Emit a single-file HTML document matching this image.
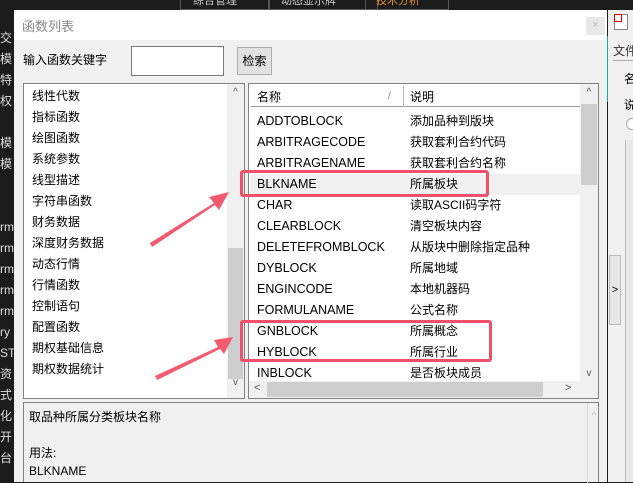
<!DOCTYPE html><html><head><meta charset="utf-8"><style>
*{margin:0;padding:0;box-sizing:border-box}
body{width:633px;height:482px;overflow:hidden;background:#1c1c1c;font-family:"Liberation Sans","Noto Sans CJK SC",sans-serif;font-size:12px;color:#000;position:relative}
.a{position:absolute}
.side{color:#ddd;font-size:12px}
</style></head><body>
<div class="a" style="left:180px;top:-1px;width:90px;height:11px;border:1px solid #555;border-top:none;color:#ccc;font-size:11px;line-height:4px;padding-left:12px;overflow:hidden">综合管理</div>
<div class="a" style="left:268px;top:-1px;width:110px;height:11px;border:1px solid #555;border-top:none;color:#ccc;font-size:11px;line-height:4px;padding-left:12px;overflow:hidden">动态显示牌</div>
<div class="a" style="left:365px;top:-1px;width:84px;height:11px;border:1px solid #555;border-top:none;color:#e89020;font-size:11px;line-height:4px;padding-left:10px;overflow:hidden">技术分析</div>
<div class="a side" style="left:0;top:28px;line-height:21px;width:14px;overflow:hidden">交<br>模<br>特<br>权<br><br>模<br>模<br><br><br>rm<br>rm<br>rm<br>rm<br>rm<br>ry<br>ST<br>资<br>式<br>化<br>开<br>台</div>
<div class="a" style="left:608px;top:10px;width:25px;height:472px;background:#f0f0f0;overflow:hidden">
 <div class="a" style="left:6px;top:4px;width:14px;height:16px;border:1px solid #888;background:#fff"></div>
 <div class="a" style="left:6px;top:4px;width:8px;height:8px;border:1px solid #d00;background:#fff"></div>
 <div class="a" style="left:5px;top:32px;font-size:12px;color:#333;white-space:nowrap">文件</div>
 <div class="a" style="left:5px;top:50px;width:20px;height:1px;background:#aaa"></div>
 <div class="a" style="left:16px;top:60px;font-size:12px;white-space:nowrap">名</div>
 <div class="a" style="left:16px;top:86px;font-size:12px;white-space:nowrap">说</div>
 <div class="a" style="left:18px;top:108px;width:12px;height:12px;border:1px solid #aaa;border-radius:50%;background:#fff"></div>
 <div class="a" style="left:17px;top:130px;width:10px;height:342px;border-left:1px solid #bbb;background:#e8e8e8"></div>
 <div class="a" style="left:1px;top:245px;width:12px;height:70px;border:1px solid #bbb;background:#e6e6e6;font-size:11px;line-height:68px;text-align:center">&gt;</div>
</div>
<div class="a" style="left:606px;top:36px;width:2px;height:66px;background:#18a8a8"></div>
<div class="a" style="left:14px;top:10px;width:593px;height:472px;background:#f0f0f0"></div>
<div class="a" style="left:14px;top:10px;width:593px;height:30px;background:#fff"></div>
<div class="a" style="left:22px;top:16px;font-size:13px;color:#888">函数列表</div>
<div class="a" style="left:586px;top:17px;width:19px;height:18px;background:#e8e8e8;color:#bbb;text-align:center;line-height:17px;font-size:11px">×</div>
<div class="a" style="left:23px;top:51px;font-size:12px">输入函数关键字</div>
<div class="a" style="left:131px;top:46px;width:93px;height:30px;border:1px solid #7a7a7a;background:#fff"></div>
<div class="a" style="left:237px;top:47px;width:35px;height:28px;border:1px solid #adadad;background:#e1e1e1;text-align:center;line-height:26px">检索</div>
<div class="a" style="left:23px;top:83px;width:222px;height:316px;border:1px solid #828282;background:#fff">
 <div style="position:absolute;left:8px;top:2px;line-height:21px">线性代数<br>指标函数<br>绘图函数<br>系统参数<br>线型描述<br>字符串函数<br>财务数据<br>深度财务数据<br>动态行情<br>行情函数<br>控制语句<br>配置函数<br>期权基础信息<br>期权数据统计</div>
 <div style="position:absolute;left:203px;top:0;width:17px;height:314px;background:#f0f0f0"></div>
 <div style="position:absolute;left:204px;top:3px;width:15px;font-size:10px;color:#555;text-align:center">&#94;</div>
 <div style="position:absolute;left:204px;top:164px;width:15px;height:131px;background:#cdcdcd"></div>
 <div style="position:absolute;left:204px;top:293px;width:15px;font-size:10px;color:#555;text-align:center">v</div>
</div>
<div class="a" style="left:248px;top:83px;width:351px;height:316px;border:1px solid #828282;background:#fff;overflow:hidden">
 <div style="position:absolute;left:2px;top:2px;width:329px;height:21px;border-bottom:1px solid #999;"></div>
 <div style="position:absolute;left:8px;top:3px;line-height:20px">名称</div>
 <div style="position:absolute;left:139px;top:3px;line-height:20px;color:#888;font-size:10px">/</div>
 <div style="position:absolute;left:154px;top:2px;width:1px;height:21px;background:#bbb"></div>
 <div style="position:absolute;left:161px;top:3px;line-height:20px">说明</div>
 <div style="position:absolute;left:1px;top:90px;width:330px;height:21px;background:#f0f0f0"></div>
 <div style="position:absolute;left:8px;top:27px;line-height:21px;font-size:12.5px">ADDTOBLOCK<br>ARBITRAGECODE<br>ARBITRAGENAME<br>BLKNAME<br>CHAR<br>CLEARBLOCK<br>DELETEFROMBLOCK<br>DYBLOCK<br>ENGINCODE<br>FORMULANAME<br>GNBLOCK<br>HYBLOCK<br>INBLOCK</div>
 <div style="position:absolute;left:161px;top:27px;line-height:21px">添加品种到版块<br>获取套利合约代码<br>获取套利合约名称<br>所属板块<br>读取ASCII码字符<br>清空板块内容<br>从版块中删除指定品种<br>所属地域<br>本地机器码<br>公式名称<br>所属概念<br>所属行业<br>是否板块成员</div>
 <div style="position:absolute;left:331px;top:0;width:18px;height:314px;background:#f0f0f0"></div>
 <div style="position:absolute;left:332px;top:3px;width:16px;font-size:10px;color:#555;text-align:center">&#94;</div>
 <div style="position:absolute;left:332px;top:20px;width:16px;height:81px;background:#cdcdcd"></div>
 <div style="position:absolute;left:332px;top:284px;width:16px;font-size:10px;color:#555;text-align:center">v</div>
 <div style="position:absolute;left:0;top:297px;width:331px;height:17px;background:#f0f0f0"></div>
 <div style="position:absolute;left:18px;top:298px;width:276px;height:15px;background:#cdcdcd"></div>
 <div style="position:absolute;left:5px;top:298px;font-size:11px;color:#555">&lt;</div>
 <div style="position:absolute;left:316px;top:298px;font-size:11px;color:#555">&gt;</div>
</div>
<div class="a" style="left:23px;top:402px;width:576px;height:80px;border:1px solid #828282;border-bottom:none;background:#f0f0f0">
 <div style="position:absolute;left:5px;top:5px;line-height:18px">取品种所属分类板块名称<br><br>用法:<br>BLKNAME</div>
 <div style="position:absolute;left:563px;top:0;width:1px;height:80px;background:#ddd"></div>
 <div style="position:absolute;left:563px;top:8px;width:14px;font-size:10px;color:#bbb;text-align:center">&#94;</div>
</div>
<div class="a" style="left:240px;top:170px;width:249px;height:27px;border:3px solid #f0506a;border-radius:3px"></div>
<div class="a" style="left:240px;top:320px;width:252px;height:42px;border:3px solid #f0506a;border-radius:3px"></div>
<svg class="a" style="left:0;top:0" width="633" height="482">
<g fill="#f45a6e">
<polygon points="150,243 214,203 209,197 229,192 219,210 215,205 152,247"/>
<polygon points="155,376 218,347 214,340 233,337 224,354 220,349 157,380"/>
</g></svg>
</body></html>
